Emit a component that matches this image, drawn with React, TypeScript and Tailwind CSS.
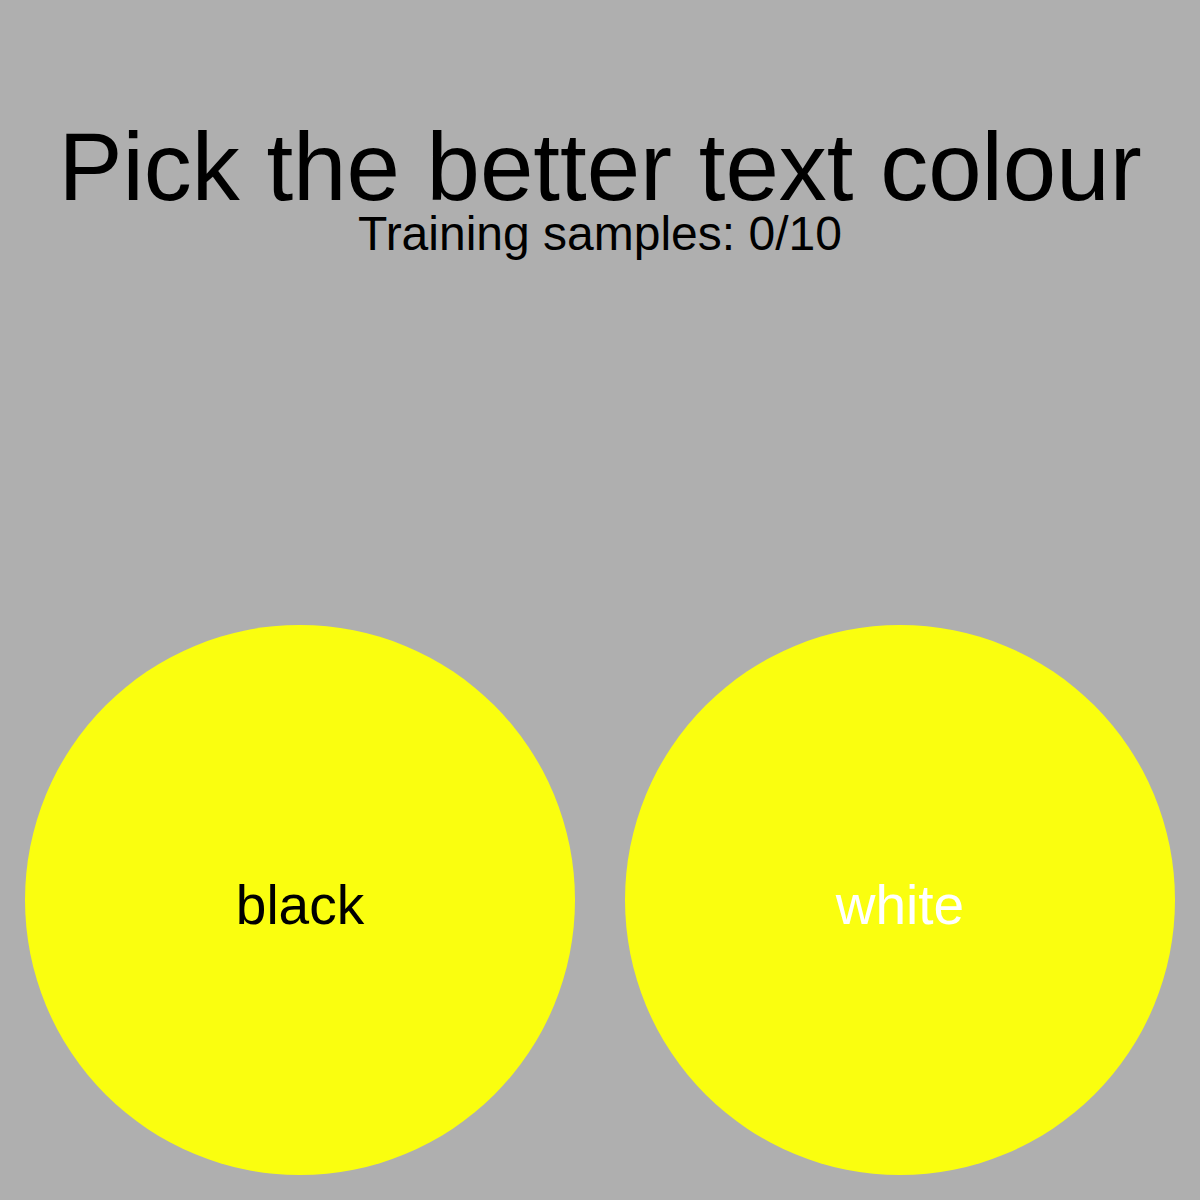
export default function App() {
  return (
    <div
      className="w-[1200px] h-[1200px] bg-[#afafaf] flex flex-col items-center text-black"
      style={{ fontFamily: '"Liberation Sans", Arial, sans-serif' }}
    >
      <div className="pt-[124px] text-[96px] leading-[86px] text-center whitespace-nowrap">
        Pick the better text colour
      </div>
      <div className="text-[48px] leading-[48px] text-center whitespace-nowrap">
        Training samples: 0/10
      </div>
      <div className="mt-[367px] w-full flex justify-around">
        <button className="w-[550px] h-[550px] rounded-full bg-[#fafe0f] flex items-center justify-center pt-[10px] text-[55px] text-black">
          black
        </button>
        <button className="w-[550px] h-[550px] rounded-full bg-[#fafe0f] flex items-center justify-center pt-[10px] text-[55px] text-white">
          white
        </button>
      </div>
    </div>
  );
}
